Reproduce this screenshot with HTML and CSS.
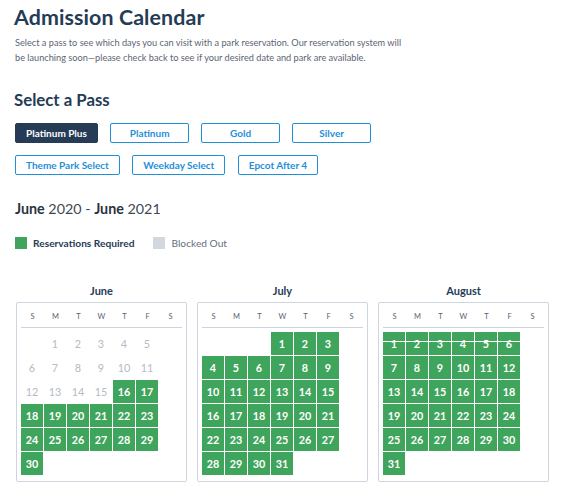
FILE: index.html
```html
<!DOCTYPE html>
<html>
<head>
<meta charset="utf-8">
<link rel="stylesheet" href="styles.css">
</head>
<body>
<main class="page">
  <h1 class="title">Admission Calendar</h1>
  <p class="intro">Select a pass to see which days you can visit with a park reservation. Our reservation system will be launching soon—please check back to see if your desired date and park are available.</p>
  <h2 class="subtitle">Select a Pass</h2>
  <div class="passes">
    <div class="pass-row">
      <button class="pass active">Platinum Plus</button>
      <button class="pass">Platinum</button>
      <button class="pass">Gold</button>
      <button class="pass">Silver</button>
    </div>
    <div class="pass-row">
      <button class="pass">Theme Park Select</button>
      <button class="pass">Weekday Select</button>
      <button class="pass">Epcot After 4</button>
    </div>
  </div>
  <div class="range"><b>June</b> 2020 - <b>June</b> 2021</div>
  <div class="legend">
    <span class="swatch green"></span><span class="legend-label strong">Reservations Required</span>
    <span class="swatch grey"></span><span class="legend-label">Blocked Out</span>
  </div>
  <div class="months">
    <section class="month">
      <h3 class="month-name">June</h3>
      <div class="cal">
        <div class="week"><span>S</span><span>M</span><span>T</span><span>W</span><span>T</span><span>F</span><span>S</span></div>
        <div class="days">
          <span></span><span class="off">1</span><span class="off">2</span><span class="off">3</span><span class="off">4</span><span class="off">5</span><span></span>
          <span class="off">6</span><span class="off">7</span><span class="off">8</span><span class="off">9</span><span class="off">10</span><span class="off">11</span><span></span>
          <span class="off">12</span><span class="off">13</span><span class="off">14</span><span class="off">15</span><span class="on">16</span><span class="on">17</span><span></span>
          <span class="on">18</span><span class="on">19</span><span class="on">20</span><span class="on">21</span><span class="on">22</span><span class="on">23</span><span></span>
          <span class="on">24</span><span class="on">25</span><span class="on">26</span><span class="on">27</span><span class="on">28</span><span class="on">29</span><span></span>
          <span class="on">30</span>
        </div>
      </div>
    </section>
    <section class="month">
      <h3 class="month-name">July</h3>
      <div class="cal">
        <div class="week"><span>S</span><span>M</span><span>T</span><span>W</span><span>T</span><span>F</span><span>S</span></div>
        <div class="days">
          <span></span><span></span><span></span><span class="on">1</span><span class="on">2</span><span class="on">3</span><span></span>
          <span class="on">4</span><span class="on">5</span><span class="on">6</span><span class="on">7</span><span class="on">8</span><span class="on">9</span><span></span>
          <span class="on">10</span><span class="on">11</span><span class="on">12</span><span class="on">13</span><span class="on">14</span><span class="on">15</span><span></span>
          <span class="on">16</span><span class="on">17</span><span class="on">18</span><span class="on">19</span><span class="on">20</span><span class="on">21</span><span></span>
          <span class="on">22</span><span class="on">23</span><span class="on">24</span><span class="on">25</span><span class="on">26</span><span class="on">27</span><span></span>
          <span class="on">28</span><span class="on">29</span><span class="on">30</span><span class="on">31</span>
        </div>
      </div>
    </section>
    <section class="month">
      <h3 class="month-name">August</h3>
      <div class="cal">
        <div class="week"><span>S</span><span>M</span><span>T</span><span>W</span><span>T</span><span>F</span><span>S</span></div>
        <div class="days">
          <span class="on cut">1</span><span class="on cut">2</span><span class="on cut">3</span><span class="on cut">4</span><span class="on cut">5</span><span class="on cut">6</span><span></span>
          <span class="on">7</span><span class="on">8</span><span class="on">9</span><span class="on">10</span><span class="on">11</span><span class="on">12</span><span></span>
          <span class="on">13</span><span class="on">14</span><span class="on">15</span><span class="on">16</span><span class="on">17</span><span class="on">18</span><span></span>
          <span class="on">19</span><span class="on">20</span><span class="on">21</span><span class="on">22</span><span class="on">23</span><span class="on">24</span><span></span>
          <span class="on">25</span><span class="on">26</span><span class="on">27</span><span class="on">28</span><span class="on">29</span><span class="on">30</span><span></span>
          <span class="on">31</span>
        </div>
      </div>
    </section>
  </div>
</main>
</body>
</html>
```

FILE: styles.css
```css
* { box-sizing: border-box; }
html, body { margin: 0; padding: 0; background: #fff; }
body {
  font-family: "Lato", "Liberation Sans", sans-serif;
  color: #253b56;
}
.page { padding: 0 0 0 15px; }
.title {
  margin: 4px 0 0 -1px;
  font-size: 21.4px;
  line-height: 26px;
  font-weight: 700;
  color: #253b56;
  letter-spacing: 0.1px;
}
.intro {
  margin: 6.4px 0 0;
  width: 392px;
  font-size: 9.2px;
  line-height: 14.6px;
  color: #5b6573;
}
.subtitle {
  margin: 24.4px 0 0 -1px;
  font-size: 16.8px;
  line-height: 20px;
  font-weight: 700;
  color: #253b56;
}
.passes { margin-top: 13.3px; display: flex; flex-direction: column; gap: 12.6px; }
.pass-row { display: flex; gap: 12.5px; }
.pass {
  min-width: 78.5px;
  height: 19.5px;
  padding: 0 10px;
  border: 1.5px solid #1f8fd8;
  border-radius: 2px;
  background: #fff;
  color: #1f8fd8;
  font-family: "Lato", "Liberation Sans", sans-serif;
  font-size: 10px;
  font-weight: 700;
  line-height: 16px;
}
.pass.active { background: #253b56; border-color: #253b56; color: #fff; }
.range {
  margin-top: 25.3px;
  font-size: 14.3px;
  line-height: 18px;
  color: #3f4852;
}
.range b { font-weight: 700; color: #2a3340; }
.legend {
  margin-top: 18.7px;
  display: flex;
  align-items: center;
  height: 12px;
}
.swatch { width: 12px; height: 12px; display: inline-block; }
.swatch.green { background: #3fa45c; }
.swatch.grey { background: #d3d8df; margin-left: 19px; }
.legend-label { font-size: 10.2px; margin-left: 6px; color: #65707d; }
.legend-label.strong { font-weight: 700; color: #253b56; }
.months {
  margin-top: 35px;
  margin-left: 1px;
  display: flex;
  gap: 10px;
}
.month { width: 171px; }
.month-name {
  margin: 0;
  font-size: 11px;
  line-height: 14px;
  font-weight: 700;
  text-align: center;
  color: #253b56;
}
.cal {
  margin-top: 4.6px;
  border: 1px solid #cfd5de;
  border-radius: 2px;
  padding: 7.4px 4px 5.5px;
}
.week {
  display: grid;
  grid-template-columns: repeat(7, 23px);
  border-bottom: 1px solid #cdd3dc;
  padding-bottom: 4.6px;
  font-size: 7.5px;
  line-height: 12px;
  color: #5b6370;
  text-align: center;
}
.days {
  margin-top: 4px;
  display: grid;
  grid-template-columns: repeat(7, 22px);
  grid-auto-rows: 23px;
  gap: 1px;
}
.days span {
  display: flex;
  align-items: center;
  justify-content: center;
  font-size: 10.8px;
  font-weight: 700;
}
.days .on { background: #3fa45c; color: #fff; }
.days .off { color: #b4bbc5; font-weight: 400; }
.days .cut {
  background: linear-gradient(#3fa45c 0 9px, #fff 9px 10px, #3fa45c 10px);
}
```
